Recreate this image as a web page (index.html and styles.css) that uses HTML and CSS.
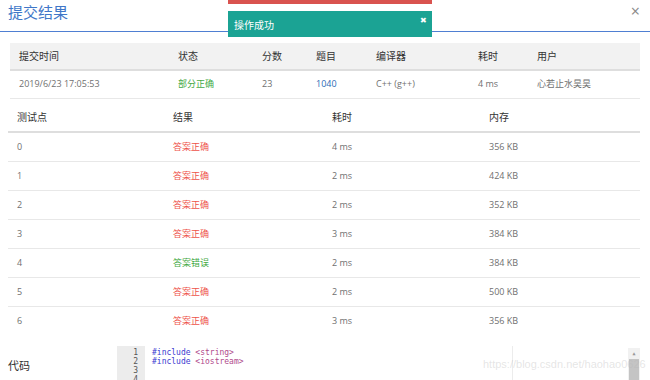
FILE: index.html
```html
<!DOCTYPE html>
<html>
<head>
  <meta charset="UTF-8">
  <title>提交结果</title>
  <link rel="stylesheet" href="styles.css">
</head>
<body>
  <div class="modal-head">
    <h3 class="modal-title">提交结果</h3>
    <span class="close">&times;</span>
  </div>

  <div class="toast toast-error"></div>
  <div class="toast toast-ok">
    <span>操作成功</span>
    <span class="toast-close">&#10006;</span>
  </div>

  <table class="tbl tbl-summary">
    <colgroup>
      <col style="width:159px"><col style="width:84px"><col style="width:54px"><col style="width:60px">
      <col style="width:102px"><col style="width:59px"><col>
    </colgroup>
    <thead>
      <tr><th>提交时间</th><th>状态</th><th>分数</th><th>题目</th><th>编译器</th><th>耗时</th><th>用户</th></tr>
    </thead>
    <tbody>
      <tr>
        <td>2019/6/23 17:05:53</td>
        <td class="ok">部分正确</td>
        <td>23</td>
        <td><a class="link" href="#">1040</a></td>
        <td>C++ (g++)</td>
        <td>4 ms</td>
        <td>心若止水昊昊</td>
      </tr>
    </tbody>
  </table>

  <table class="tbl tbl-cases">
    <colgroup>
      <col style="width:156px"><col style="width:159px"><col style="width:157px"><col>
    </colgroup>
    <thead>
      <tr><th>测试点</th><th>结果</th><th>耗时</th><th>内存</th></tr>
    </thead>
    <tbody>
      <tr><td>0</td><td class="bad">答案正确</td><td>4 ms</td><td>356 KB</td></tr>
      <tr><td>1</td><td class="bad">答案正确</td><td>2 ms</td><td>424 KB</td></tr>
      <tr><td>2</td><td class="bad">答案正确</td><td>2 ms</td><td>352 KB</td></tr>
      <tr><td>3</td><td class="bad">答案正确</td><td>3 ms</td><td>384 KB</td></tr>
      <tr><td>4</td><td class="ok">答案错误</td><td>2 ms</td><td>384 KB</td></tr>
      <tr><td>5</td><td class="bad">答案正确</td><td>2 ms</td><td>500 KB</td></tr>
      <tr><td>6</td><td class="bad">答案正确</td><td>3 ms</td><td>356 KB</td></tr>
    </tbody>
  </table>

  <div class="code-row">
    <label class="code-label">代码</label>
    <div class="editor">
      <div class="gutter">
        <div>1</div><div>2</div><div>3</div><div>4</div>
      </div>
      <div class="lines">
        <div><span class="kw">#include</span> <span class="str">&lt;string&gt;</span></div>
        <div><span class="kw">#include</span> <span class="str">&lt;iostream&gt;</span></div>
        <div>&nbsp;</div>
        <div>&nbsp;</div>
      </div>
      <div class="print-margin"></div>
      <div class="scrollbar">
        <div class="arrow">&#9650;</div>
        <div class="thumb"></div>
      </div>
    </div>
  </div>

  <div class="watermark">https://blog.csdn.net/haohao0626</div>
</body>
</html>
```

FILE: styles.css
```css
html {
  background: white;
}
body {
  margin: 0;
  font: 11px/1.4 "Open Sans", "Noto Sans CJK SC", sans-serif;
  color: #707070;
  position: relative;
  height: 380px;
  overflow: hidden;
}
.modal-head {
  height: 31px;
  border-bottom: 1px solid #4f7fd2;
  display: flex;
  align-items: center;
  justify-content: space-between;
  padding: 0 10px 0 8px;
}
.modal-title {
  margin: 0 0 6px;
  font-size: 15px;
  font-weight: normal;
  color: #3f77c8;
}
.close {
  font-size: 16px;
  color: #888;
  margin-bottom: 9px;
}
.toast {
  position: absolute;
  left: 228px;
  width: 204px;
}
.toast-error {
  top: 0;
  height: 4px;
  background: #d9534f;
}
.toast-ok {
  top: 11px;
  height: 26px;
  background: #1ba394;
  color: #fff;
  font-size: 10px;
  box-sizing: border-box;
  padding: 0 6px;
  display: flex;
  align-items: center;
  justify-content: space-between;
}
.toast-ok span:first-child {
  margin-top: 1px;
}
.toast-close {
  font-size: 8px;
  align-self: flex-start;
  margin-top: 3px;
  margin-right: -1px;
}
.tbl {
  border-collapse: collapse;
  table-layout: fixed;
}
.tbl th {
  text-align: left;
  font-weight: normal;
  color: #333;
  font-size: 10px;
  padding: 0 9px;
  border-bottom: 2px solid #dedede;
}
.tbl td {
  font-size: 9px;
  padding: 0 9px;
  border-bottom: 1px solid #e8e8e8;
}
.tbl-summary {
  margin: 11px 0 0 10px;
  width: 630px;
}
.tbl-summary th {
  background: #f2f2f2;
  height: 26px;
}
.tbl-summary td {
  height: 27px;
}
.tbl-cases {
  margin: 3px 0 0 8px;
  width: 632px;
}
.tbl-cases th {
  height: 29px;
}
.tbl-cases td {
  height: 28px;
}
.tbl-cases tr:last-child td {
  border-bottom: none;
}
.ok {
  color: #43a944;
}
.bad {
  color: #ee5249;
}
.link {
  color: #2b6bb5;
  text-decoration: none;
}
.code-row {
  display: flex;
  margin-top: 11px;
}
.code-label {
  width: 109px;
  padding-left: 8px;
  padding-top: 12px;
  color: #333;
  font-size: 11px;
}
.editor {
  position: relative;
  display: flex;
  width: 523px;
  height: 60px;
  font: 8px/9px "DejaVu Sans Mono", monospace;
}
.gutter {
  width: 28px;
  background: #ececec;
  color: #555;
  text-align: right;
  box-sizing: border-box;
  padding: 2px 7px 0 0;
}
.lines {
  padding: 2px 0 0 7px;
  color: #333;
}
.kw {
  color: #3a3ad0;
}
.str {
  color: #b04a8c;
}
.print-margin {
  position: absolute;
  left: 395px;
  top: 0;
  bottom: 0;
  border-left: 1px solid #ececec;
}
.scrollbar {
  position: absolute;
  right: 0;
  top: 2px;
  width: 12px;
  bottom: 0;
  background: #f1f1f1;
}
.arrow {
  font-size: 5px;
  line-height: 10px;
  text-align: center;
  color: #999;
}
.thumb {
  margin: 1px 1px 0;
  height: 40px;
  background: #c4c4c4;
}
.watermark {
  position: absolute;
  left: 483px;
  top: 358px;
  font: 11px "Liberation Sans", sans-serif;
  color: rgba(180, 180, 180, 0.35);
  white-space: nowrap;
}
```
